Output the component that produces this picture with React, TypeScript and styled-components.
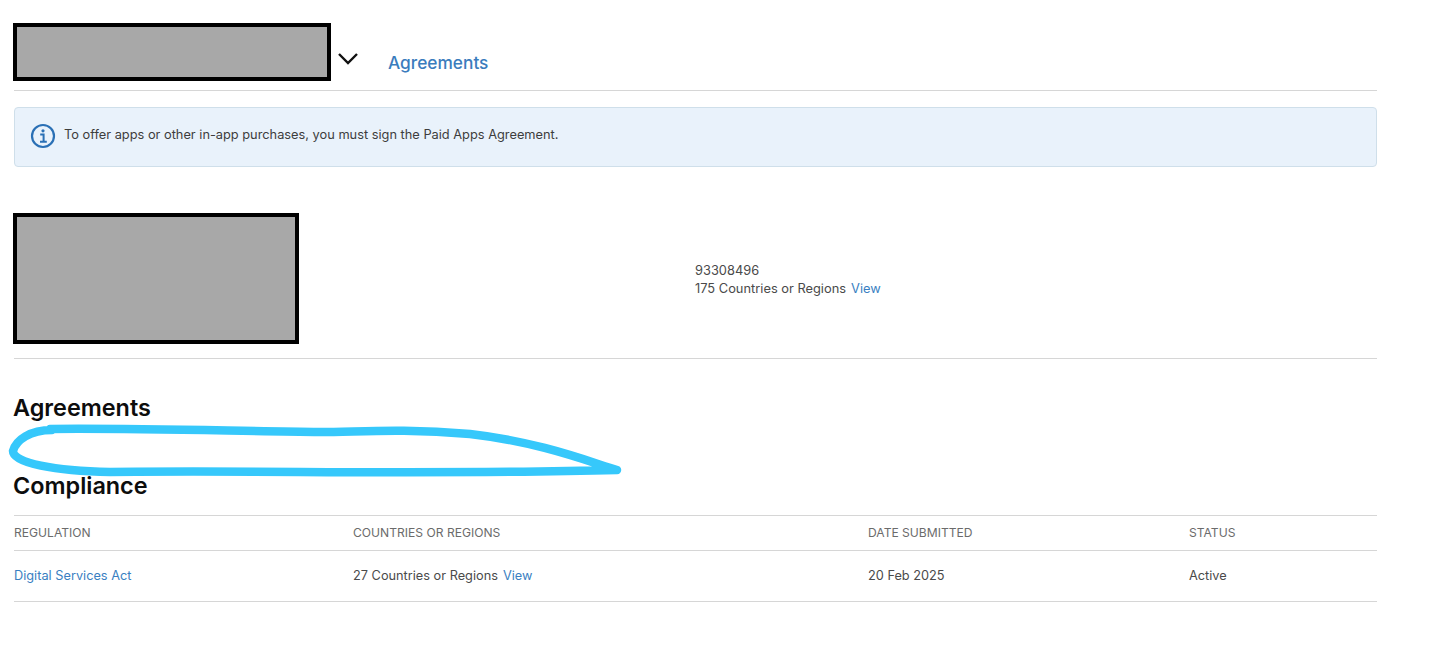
import styled, { createGlobalStyle } from "styled-components";

const GlobalStyle = createGlobalStyle`
  html, body {
    margin: 0;
    padding: 0;
    background: #fff;
    font-family: Inter, "Liberation Sans", sans-serif;
    color: #333;
  }
`;

const Page = styled.div`
  position: relative;
  width: 1363px;
  height: 651px;
  padding: 0 39px 0 14px;
  overflow: hidden;
`;

const Header = styled.header`
  display: flex;
  align-items: flex-end;
  height: 90px;
  border-bottom: 1px solid #d6d6d6;
`;

const Redacted = styled.div<{ $w: number; $h: number }>`
  box-sizing: border-box;
  width: ${(p) => p.$w}px;
  height: ${(p) => p.$h}px;
  margin-left: -1px;
  background: #a8a8a8;
  border: 4.5px solid #000;
  flex: none;
`;

const TeamPicker = styled.div`
  display: flex;
  align-items: flex-start;
  padding-bottom: 9px;
`;

const Chevron = styled.svg`
  margin: 29px 0 0 6px;
  display: block;
`;

const NavLink = styled.a`
  margin: 0 0 16px 29px;
  font-size: 17.3px;
  line-height: 22px;
  font-weight: 500;
  color: #3a7cbd;
`;

const Banner = styled.div`
  box-sizing: border-box;
  display: flex;
  align-items: center;
  gap: 9px;
  height: 60px;
  margin-top: 16px;
  padding: 0 15px 3px;
  background: #e9f2fb;
  border: 1px solid #cfdfea;
  border-radius: 4px;
  font-size: 12.8px;
  color: #3d3d3d;
`;

const BannerText = styled.span`
  margin: -2px 0 0 -1px;
`;

const Summary = styled.section`
  display: flex;
  align-items: flex-start;
  height: 145px;
  margin-top: 46px;
  border-bottom: 1px solid #d6d6d6;
`;

const SummaryInfo = styled.div`
  margin: 49px 0 0 396px;
  font-size: 12.85px;
  line-height: 18px;
  color: #4a4a4a;
`;

const Link = styled.a`
  color: #3a7fc2;
`;

const ViewLink = styled(Link)`
  margin-left: 5px;
`;

const Heading = styled.h2<{ $top: number }>`
  margin: ${(p) => p.$top}px 0 0 -1px;
  font-size: 23.4px;
  line-height: 30px;
  font-weight: 600;
  color: #0d0d0d;
`;

const Table = styled.div`
  margin-top: 14px;
  border-top: 1px solid #d6d6d6;
`;

const Row = styled.div<{ $h: number; $muted?: boolean }>`
  box-sizing: border-box;
  display: grid;
  grid-template-columns: 339px 515px 321px 1fr;
  align-items: center;
  height: ${(p) => p.$h}px;
  padding-bottom: 2px;
  border-bottom: 1px solid #d6d6d6;
  font-size: ${(p) => (p.$muted ? 12.1 : 12.75)}px;
  color: ${(p) => (p.$muted ? "#6b6b6b" : "#4a4a4a")};
`;

const Scribble = styled.svg`
  position: absolute;
  left: 0;
  top: 415px;
  pointer-events: none;
`;

export default function App() {
  return (
    <Page>
      <GlobalStyle />
      <Header>
        <TeamPicker>
          <Redacted $w={318} $h={58} />
          <Chevron width="22" height="14" viewBox="0 0 22 14" fill="none">
            <path d="M2 2l9 9 9-9" stroke="#111" strokeWidth="2.4" />
          </Chevron>
        </TeamPicker>
        <NavLink>Agreements</NavLink>
      </Header>

      <Banner>
        <svg width="26" height="26" viewBox="0 0 26 26" fill="none">
          <circle cx="13" cy="13" r="11" stroke="#2a70b5" strokeWidth="2.2" />
          <circle cx="13" cy="7.8" r="1.6" fill="#2a70b5" />
          <path d="M10.2 11.4H13.6V18.6M10 18.8H16.8" stroke="#2a70b5" strokeWidth="2" />
        </svg>
        <BannerText>To offer apps or other in-app purchases, you must sign the Paid Apps Agreement.</BannerText>
      </Banner>

      <Summary>
        <Redacted $w={286} $h={131} />
        <SummaryInfo>
          93308496
          <br />
          175 Countries or Regions<ViewLink>View</ViewLink>
        </SummaryInfo>
      </Summary>

      <Heading $top={34}>Agreements</Heading>
      <Heading $top={48}>Compliance</Heading>

      <Table>
        <Row $h={35} $muted>
          <span>REGULATION</span>
          <span>COUNTRIES OR REGIONS</span>
          <span>DATE SUBMITTED</span>
          <span>STATUS</span>
        </Row>
        <Row $h={51}>
          <Link>Digital Services Act</Link>
          <span>
            27 Countries or Regions<ViewLink>View</ViewLink>
          </span>
          <span>20 Feb 2025</span>
          <span>Active</span>
        </Row>
      </Table>

      <Scribble width="640" height="70" viewBox="0 415 640 70" fill="none">
        <path
          d="M52 430C30 430 16 440 13 451C13 463 55 471 110 472C250 470 440 475 617 470C590 462 540 442 470 434C400 428 360 432 320 432C230 431 130 428 50 429"
          stroke="#36c8fb"
          strokeWidth="8.5"
          strokeLinecap="round"
          strokeLinejoin="round"
        />
      </Scribble>
    </Page>
  );
}
